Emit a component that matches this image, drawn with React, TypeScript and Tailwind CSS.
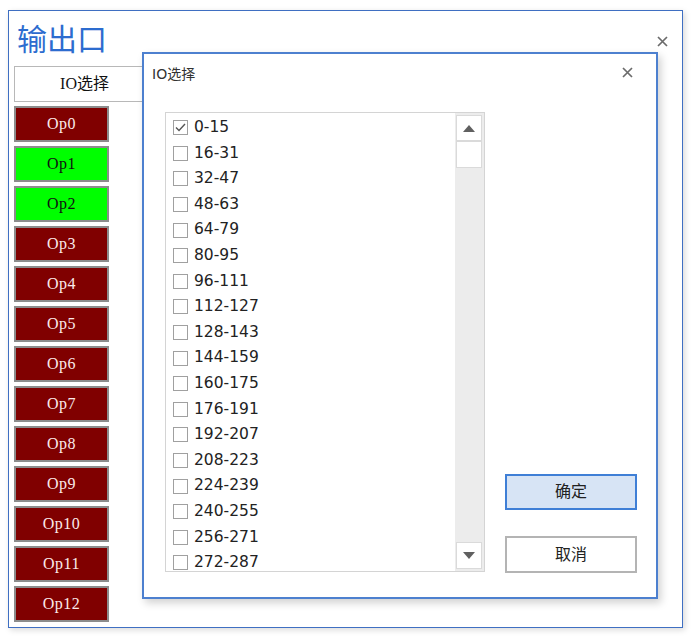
import React from 'react';

const ranges = [
    '0-15', '16-31', '32-47', '48-63', '64-79', '80-95', '96-111', '112-127', '128-143',
    '144-159', '160-175', '176-191', '192-207', '208-223', '224-239', '240-255', '256-271', '272-287',
];

const outputs = Array.from({ length: 13 }, (_, i) => ({ name: `Op${i}`, on: i === 1 || i === 2 }));

function CloseIcon({ className }: { className?: string }) {
    return (
        <svg className={className} width="11" height="11" viewBox="0 0 11 11" fill="none">
            <path d="M1 1l9 9M10 1l-9 9" stroke="#6b6b6b" strokeWidth={1.7} />
        </svg>
    );
}

function Triangle({ down }: { down?: boolean }) {
    return (
        <svg width="12" height="7" viewBox="0 0 12 7">
            <path d={down ? 'M0 0h12L6 7z' : 'M0 7h12L6 0z'} fill="#606060" />
        </svg>
    );
}

function CheckRow({ label, checked }: { label: string; checked?: boolean }) {
    return (
        <div className="flex h-[25.6px] items-center">
            <span className="flex h-[15px] w-[15px] items-center justify-center border border-[#a0a0a0] bg-white">
                {checked && (
                    <svg width="11" height="9" viewBox="0 0 11 9" fill="none">
                        <path d="M1 4.5l3 3L10 1" stroke="#555" strokeWidth={1.4} />
                    </svg>
                )}
            </span>
            <span className="ml-[6px] text-[15.5px] leading-none text-[#222]">{label}</span>
        </div>
    );
}

function IoDialog() {
    return (
        <div className="absolute left-[142px] top-[52px] flex h-[547px] w-[516px] flex-col border-2 border-[#4d80cf] bg-white shadow-[3px_4px_8px_rgba(0,0,0,0.18)]">
            <div className="relative h-[58px]">
                <span className="absolute left-[8px] top-[10px] text-[14px] text-[#333]">IO选择</span>
                <CloseIcon className="absolute right-[23px] top-[13px]" />
            </div>
            <div className="flex pl-[21px]">
                {/* list with scrollbar */}
                <div className="flex h-[460px] w-[320px] border border-[#d4d4d4] bg-white">
                    <div className="flex-1 overflow-hidden pl-[7px] pt-[2px]">
                        {ranges.map((r, i) => (
                            <CheckRow key={r} label={r} checked={i === 0} />
                        ))}
                    </div>
                    <div className="flex w-[29px] flex-col bg-[#ececec] py-[2px] pl-[1px] pr-[2px]">
                        <div className="flex h-[26px] items-center justify-center border border-[#dadada] bg-white">
                            <Triangle />
                        </div>
                        <div className="h-[27px] border border-[#dadada] bg-white" />
                        <div className="flex-1" />
                        <div className="flex h-[27px] items-center justify-center border border-[#dadada] bg-white">
                            <Triangle down />
                        </div>
                    </div>
                </div>
                <div className="ml-[20px] flex h-[461px] w-[132px] flex-col justify-end gap-[26px]">
                    <button className="h-[36px] border-2 border-[#3f7fd6] bg-[#d7e4f5] text-[16px] text-[#222]">确定</button>
                    <button className="h-[37px] border-2 border-[#b4b4b4] bg-white text-[16px] text-[#222]">取消</button>
                </div>
            </div>
        </div>
    );
}

export default function App() {
    return (
        <div
            className="relative h-[641px] w-[692px] overflow-hidden bg-white pl-[8px] pt-[10px]"
            style={{ fontFamily: '"DejaVu Sans", "Noto Sans CJK SC", sans-serif' }}
        >
            {/* main window */}
            <div className="relative h-[618px] w-[675px] border-[1.5px] border-[#3f6fc2] bg-white px-[5px] shadow-[2px_2px_6px_rgba(0,0,0,0.15)]">
                <div className="h-[55px] pl-[3px] pt-[11px]">
                    <span
                        className="text-[30px] leading-none text-[#2d6ccf]"
                        style={{ fontFamily: '"Noto Sans CJK SC", sans-serif' }}
                    >
                        输出口
                    </span>
                </div>
                <CloseIcon className="absolute right-[14px] top-[25px]" />
                <div style={{ fontFamily: '"Liberation Serif", "Noto Sans CJK SC", serif' }}>
                    <button className="flex h-[36px] w-[141px] items-center justify-center border border-[#b8b8b8] bg-white text-[16px] text-[#111]">
                        IO选择
                    </button>
                    <div className="mt-[4px] flex flex-col gap-[4px]">
                        {outputs.map(o => (
                            <div
                                key={o.name}
                                className={`flex h-[36px] w-[95px] items-center justify-center border-2 border-[#8c8c8c] text-[16px] tracking-[0.5px] ${o.on ? 'bg-[#00ff00] text-[#111]' : 'bg-[#800000] text-[#fbeaea]'}`}
                            >
                                {o.name}
                            </div>
                        ))}
                    </div>
                </div>
            </div>
            <IoDialog />
        </div>
    );
}
